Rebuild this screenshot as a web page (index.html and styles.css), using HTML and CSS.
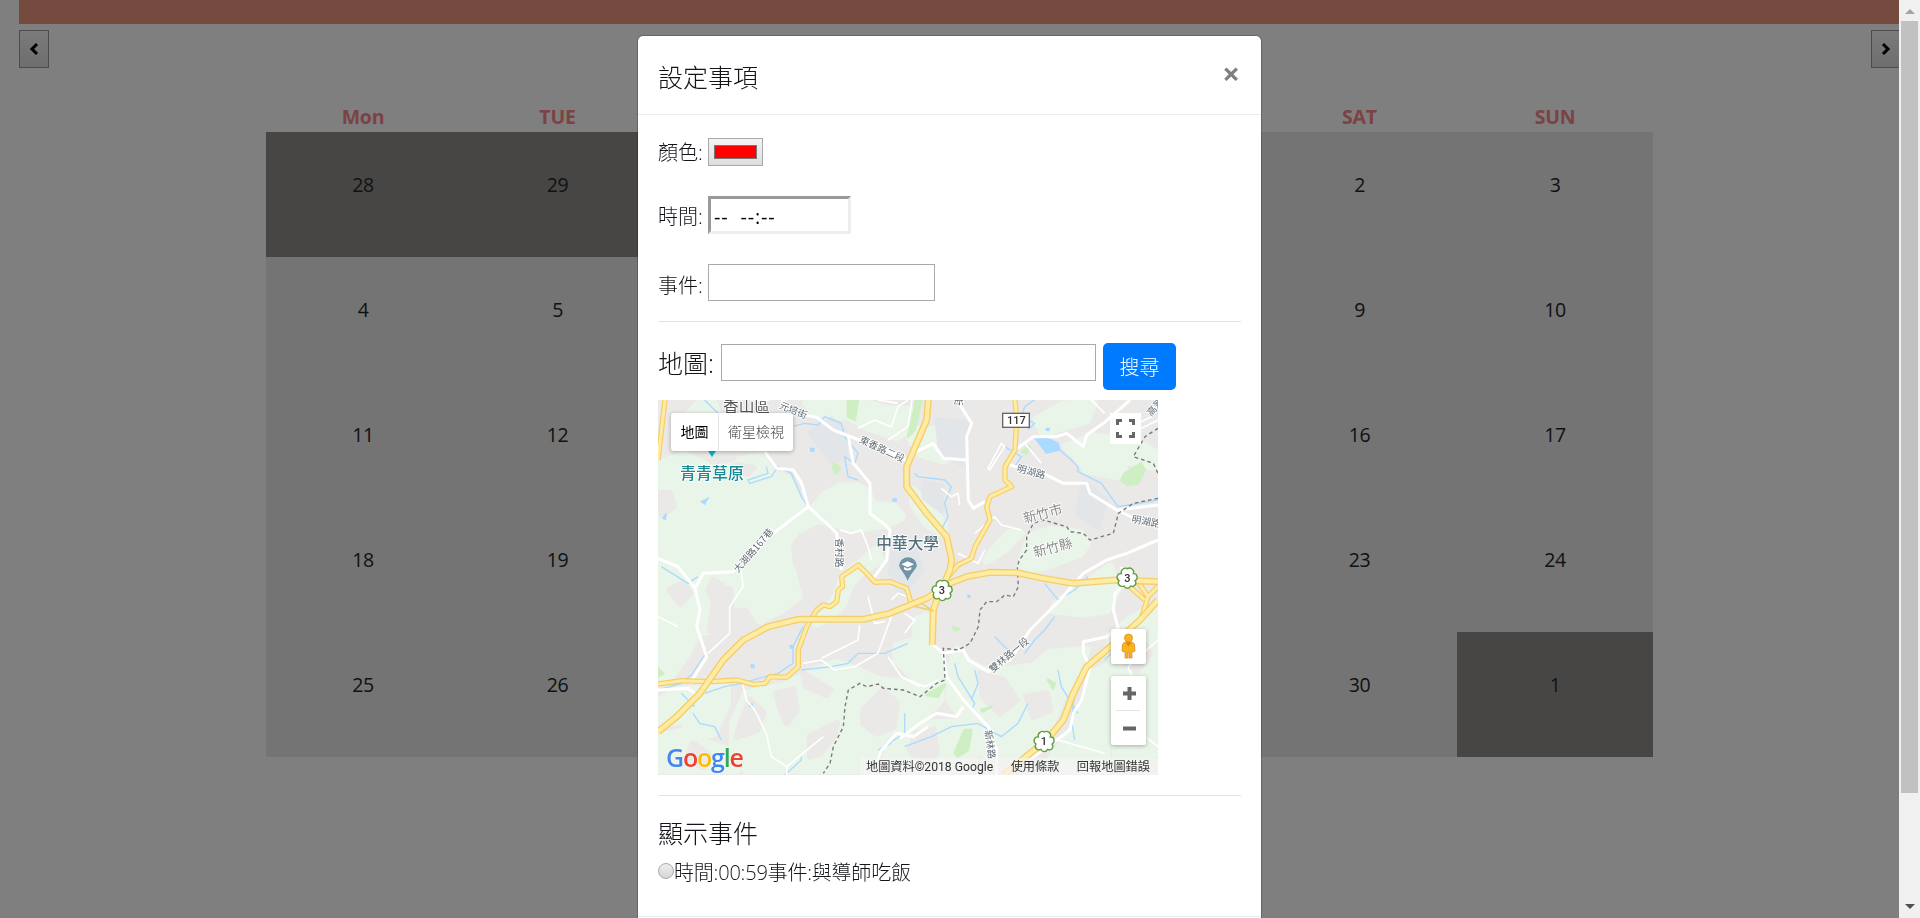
FILE: index.html
```html
<!DOCTYPE html>
<html lang="zh-Hant">
<head>
<meta charset="utf-8">
<title>設定事項</title>
<link rel="stylesheet" href="styles.css">
</head>
<body>
<div class="page">
  <div class="banner"></div>
  <div class="nav">
    <button class="nav-btn"><svg width="10" height="14" viewBox="0 0 10 14"><path d="M8 2 3 7l5 5"/></svg></button>
    <button class="nav-btn"><svg width="10" height="14" viewBox="0 0 10 14"><path d="M2 2l5 5-5 5"/></svg></button>
  </div>
  <div class="calendar">
    <b>Mon</b><b>TUE</b><b>WED</b><b>THU</b><b>FRI</b><b>SAT</b><b>SUN</b>
    <div class="day out">28</div><div class="day out">29</div><div class="day out">30</div><div class="day out">31</div><div class="day">1</div><div class="day">2</div><div class="day">3</div>
    <div class="day">4</div><div class="day">5</div><div class="day">6</div><div class="day">7</div><div class="day">8</div><div class="day">9</div><div class="day">10</div>
    <div class="day">11</div><div class="day">12</div><div class="day">13</div><div class="day">14</div><div class="day">15</div><div class="day">16</div><div class="day">17</div>
    <div class="day">18</div><div class="day">19</div><div class="day">20</div><div class="day">21</div><div class="day">22</div><div class="day">23</div><div class="day">24</div>
    <div class="day">25</div><div class="day">26</div><div class="day">27</div><div class="day">28</div><div class="day">29</div><div class="day">30</div><div class="day out">1</div>
  </div>
</div>

<div class="backdrop">
  <div class="modal">
    <div class="modal-header">
      <h5>設定事項</h5>
      <span class="close">×</span>
    </div>
    <div class="modal-body">
      <div class="row color-row"><label>顏色:</label><span class="color-input"><i></i></span></div>
      <div class="row time-row"><label>時間:</label><span class="time-input">--&nbsp; --:--</span></div>
      <div class="row event-row"><label>事件:</label><span class="text-input"></span></div>
      <hr>
      <div class="search-row"><label>地圖:</label><span class="text-input wide"></span><button class="btn">搜尋</button></div>
      <div class="map">
        <svg class="map-art" viewBox="0 0 1500 1125">
          <rect width="1500" height="1125" fill="#ebe9e7"/>
          <g class="green" transform="translate(-24 -30)">
            <path d="M150 40H190L205 75 240 140 180 150 110 150 100 90Z"/>
            <path d="M35 220 100 195 140 215 180 225 250 215 330 200 365 250 410 265 440 320 480 370 520 320 570 290 620 290 650 305 670 345 730 350 755 380 720 400 600 420 560 400 500 390 440 420 410 460 415 520 440 580 445 620 390 660 330 690 300 640 250 640 235 570 180 540 150 600 180 660 185 720 140 730 110 790 60 860 35 870Z"/>
            <path d="M470 40H640L720 60 780 60 790 110 740 140 650 110 600 80 500 70Z"/>
            <path d="M690 510 640 540 600 580 580 640 540 680 500 700 560 620 580 560 630 520 680 480Z"/>
            <path d="M35 930 80 900 230 895 230 940 190 1030 130 1040 100 990 35 1000Z"/>
            <path d="M35 1040 120 1020 170 1060 230 1080 260 1140 35 1140Z"/>
            <path d="M290 910 400 890 500 840 560 820 640 850 680 870 760 880 870 880 870 930 800 1000 740 1000 700 1040 640 1140 290 1140 250 1080 250 1000Z"/>
            <path d="M780 140 800 120 860 120 900 150 920 190 880 210 810 190Z"/>
            <path d="M1160 90 1240 45 1330 40 1310 90 1240 110 1180 130Z"/>
            <path d="M1250 170 1330 140 1400 150 1440 140 1515 190 1515 230 1420 210 1420 260 1310 240 1280 200Z"/>
            <path d="M1120 500 1140 440 1200 420 1290 430 1310 460 1290 490 1180 530 1110 540Z"/>
            <path d="M1030 480 1080 430 1110 430 1060 480 1010 510Z"/>
            <path d="M790 300 820 330 880 400 880 430 830 400 790 340Z"/>
            <path d="M1380 530 1300 590 1220 640 1210 660 1300 670 1370 660 1400 600Z"/>
            <path d="M800 690 830 680 830 760 880 820 880 870 800 870 740 810 740 770 800 750Z"/>
            <path d="M920 780 960 820 1000 840 1080 840 1150 830 1200 790 1310 780 1290 830 1230 930 1200 1010 1150 1060 1090 1100 1000 1090 950 1000 900 930 900 850Z"/>
            <path d="M1330 850 1370 830 1370 1140 1180 1140 1240 1060 1290 980Z"/>
            <path d="M1440 690 1515 650 1515 1090 1400 1100 1390 860 1380 740Z"/>
            <path d="M760 1010 860 1000 960 1000 990 1080 900 1140 700 1140 720 1060Z"/>
          </g>
          <g class="gray" transform="translate(-24 -30)">
            <path d="M150 190 240 190 250 205 190 215Z"/>
            <path d="M260 225 310 235 290 250 260 245Z"/>
            <path d="M30 310 60 310 70 350 35 375Z"/>
            <path d="M60 600 100 580 120 610 90 640Z"/>
            <path d="M200 590 240 600 245 680 220 740 180 720Z"/>
            <path d="M380 910 430 900 440 960 410 1000 390 950Z"/>
            <path d="M460 850 540 900 530 915 470 890Z"/>
            <path d="M480 1040 560 1000 550 1040 510 1090 480 1100Z"/>
            <path d="M640 960 700 900 740 940 730 1010 680 1030 640 1000Z"/>
            <path d="M300 930 340 970 320 1020 260 1040 280 980Z"/>
            <path d="M990 850 1060 870 1100 930 1050 970 1000 920Z"/>
            <path d="M1130 920 1190 910 1200 960 1150 980Z"/>
            <path d="M1420 740 1460 730 1500 790 1460 840 1400 800Z"/>
            <path d="M800 1030 850 1020 860 1090 820 1120 780 1080Z"/>
            <path d="M130 1060 180 1100 160 1130 110 1110Z"/>
            <path d="M500 430 550 440 540 600 460 590 440 500Z"/>
          </g>
          <g class="park">
            <path d="M570 0H600L590 60 570 50Z"/><path d="M528 190 545 205 535 220 525 205Z"/>
            <path d="M750 110 775 0 790 0 770 90Z"/><path d="M1390 240 1400 220 1450 190 1460 210 1440 250 1410 255Z"/><path d="M1092 155 1115 140 1105 160Z"/>
            <path d="M890 1060 920 990 940 990 930 1050 900 1070Z"/><path d="M1170 840 1190 850 1185 865Z"/><path d="M805 885 860 855 840 890Z"/><path d="M970 930 1000 920 975 935Z"/><path d="M0 805 15 820 0 830Z"/><path d="M885 680 905 688 890 690Z"/>
          </g>
          <g class="town"><path d="M460 100 520 60 560 100 560 170 520 180Z"/><path d="M840 60 930 70 910 190 850 160Z"/><path d="M1280 250 1340 300 1320 380 1260 340Z"/><path d="M710 450 770 450 790 510 730 580 700 520Z"/><path d="M800 250 850 260 850 330 800 290Z"/></g>
          <g class="water">
            <path d="M140 0 200 60M400 80 440 70 480 75 500 50 550 70 560 110 600 160 590 190 560 170 570 230 600 240M325 200 330 220 270 240 275 250 340 230 360 200 400 220 430 290 450 320 500 360 520 390M770 220 780 230 860 240 880 260 860 310 870 350 850 390M1130 0 1100 20 1090 50 1130 70 1110 90M1040 140 1090 170 1070 200M1205 150 1240 180 1260 200 1260 215 1330 250 1380 320 1500 300"/>
            <path d="M140 765 100 825 70 850 0 870M70 880 110 920M105 940 125 970 170 980 190 1020M10 500 90 550 120 530M435 680 405 740 405 790 360 820 320 830 250 850 200 860 140 880M430 810 520 800 570 790 600 760 680 760 750 730M380 1125 430 1080 430 1070M740 940V1000L660 1050 700 1030"/>
            <path d="M890 790 900 830 950 910 940 930M950 810 960 850 940 900M1010 710 1060 760M1160 550 1200 600 1250 570 1290 530M1110 910 1080 970 1030 1010 960 970 880 980 820 1010 740 1040M1190 650 1160 690 1130 720 1100 760M1250 1020 1240 960 1250 880M1200 810 1210 860 1260 940M1340 780 1370 750"/>
            <path class="pond" d="M1131 115 1165 112 1200 130 1206 150 1165 160 1150 140Z"/>
            <path class="pond" d="M130 305 150 295 140 312ZM15 355 25 340 22 358ZM458 145h10v8h-10ZM705 297h10v6h-10ZM1165 85h8v6h-8ZM280 795h8v8h-8ZM397 736h8v8h-8ZM275 912h8v8h-8ZM930 586h6v6h-6Z"/>
          </g>
          <g class="white thin">
            <path d="M600 85 650 60 700 80 720 20 750 0M690 120 750 80 762 0M545 390 580 400 610 390 630 440 640 480M250 510 255 560 215 620 215 700 150 760M630 590 650 670 680 665M700 650 660 760 590 800 530 810 490 780 435 790M605 675 600 720 560 740 490 775M690 770 730 830 786 860M1030 130 1040 140 995 210 990 205Z M951 400 1010 350 1030 375 1090 390M850 265 880 290 900 280 905 315M1100 130 1150 190"/>
            <path d="M255 855 265 900 290 930 325 1000 340 1070 386 1100 496 1010M386 1100V1125M730 830 800 860 840 840M900 460 960 490 980 450M1200 1020 1340 1060M0 650 60 680"/>
            <path d="M660 0 720 10M1380 100 1480 50M1300 0 1340 40M1440 90 1500 60M740 640 770 660 740 700M1430 850 1410 800 1500 720M1400 1000 1450 1000 1500 1040M700 600 720 580 750 590"/>
          </g>
          <g class="white">
            <path d="M370 0 440 45 476 52 526 90 596 117 656 135 760 190M320 155 356 205 406 210 431 250 451 320 346 400 276 450 226 515 136 520 111 565 60 500 0 475M111 565 126 630 116 680 146 770 96 850M451 320 506 370 536 400 546 480 551 510M571 110 586 190 636 250 636 340 676 370 696 390 686 480 646 535"/>
            <path d="M896 0 941 70 926 110 931 300 946 325 981 305M776 155 826 130 856 175 926 180M1071 150 1126 110 1196 110 1226 100 1276 140 1286 105 1336 70 1416 0M1056 195 1166 225 1216 250 1286 250 1296 280 1376 330 1500 315M1376 330 1440 360"/>
            <path d="M826 735 856 760 866 830 916 900 991 980 1016 1050 1016 1125M856 760 916 750 931 780 991 815 1056 780 1116 690 1206 600 1276 520 1346 480 1406 460 1500 420M1391 500 1391 560 1371 580 1366 630 1381 685 1346 710 1276 725 1276 760 1296 800 1271 900 1246 940 1236 990 1196 1020 1100 1090M726 1015 786 970 836 940 896 950 916 920M640 1125 671 1050 716 1000 766 1010 810 980M0 870 90 865 110 880"/>
          </g>
          <g class="dash"><path d="M1500 85 1461 110 1426 170 1486 190 1500 220M1500 295 1426 310 1381 340 1366 400 1296 420 1276 400 1236 395 1226 380 1156 360 1126 370 1106 410 1106 450 1084 480 1078 500 1081 560 1066 590 1041 585 1016 605 986 605 966 630 961 680 936 730 901 750 856 745 861 840 836 850 786 890 736 870 676 865 661 852 626 860 606 850 571 870 561 920 556 980 526 1040 516 1090 496 1120"/></g>
          <g class="yellow-edge"><path d="M21 0 0 180M0 852 71 842 156 845 236 840 286 853 321 850 336 830 386 832 421 800 421 750 446 680 476 630 496 615 516 620 536 605 541 570 554 560 551 530 601 495 626 520 651 547 696 545 746 565 761 615M1071 0 1076 60 1071 150 1041 200 1041 240 1061 260 996 290 986 320 996 360 951 440 940 475 900 495 870 530M1440 545 1470 590 1450 655M1500 560 1470 590M1410 555 1460 600"/></g>
          <g class="yellow"><path d="M21 0 0 180M0 852 71 842 156 845 236 840 286 853 321 850 336 830 386 832 421 800 421 750 446 680 476 630 496 615 516 620 536 605 541 570 554 560 551 530 601 495 626 520 651 547 696 545 746 565 761 615M1071 0 1076 60 1071 150 1041 200 1041 240 1061 260 996 290 986 320 996 360 951 440 940 475 900 495 870 530M1440 545 1470 590 1450 655M1500 560 1470 590M1410 555 1460 600"/></g>
          <g class="yellow-edge major"><path d="M811 0 806 60 746 200 746 260 806 340 866 410 881 480 876 510 836 600 826 630 823 735M0 995 56 950 126 880 196 780 256 720 331 680 421 658 616 658 696 640 806 595 876 550 926 530 996 517 1076 518 1156 535 1246 550 1376 540 1500 545M1500 600 1446 660 1346 750 1286 800 1246 880 1216 960 1166 1020 1036 1125"/></g>
          <g class="yellow major"><path d="M811 0 806 60 746 200 746 260 806 340 866 410 881 480 876 510 836 600 826 630 823 735M0 995 56 950 126 880 196 780 256 720 331 680 421 658 616 658 696 640 806 595 876 550 926 530 996 517 1076 518 1156 535 1246 550 1376 540 1500 545M1500 600 1446 660 1346 750 1286 800 1246 880 1216 960 1166 1020 1036 1125"/></g>
          <g class="yellow-edge ramp"><path d="M765 618 825 632 790 610M860 595 885 570"/></g>
          <g class="shield">
            <path id="flower" d="M853 543C862 537 876 547 871 558 884 557 886 575 876 579 884 590 871 600 863 595 858 604 847 604 843 595 832 600 821 590 828 579 818 573 822 556 835 558 831 546 846 538 853 543Z"/>
            <use href="#flower" x="555" y="-37"/><use href="#flower" x="306" y="453"/>
            <rect x="1034" y="40" width="80" height="42"/>
          </g>
          <g class="num" text-anchor="middle"><text x="852" y="583">3</text><text x="1408" y="546">3</text><text x="1158" y="1036">1</text><text x="1075" y="72">117</text></g>
          <g transform="translate(0 -68)"><path d="M749 614C740 590 722 572 722 566a28 28 0 1 1 56 0c0 6-20 24-29 48Z" fill="#7295a6" stroke="#e5eef4" stroke-width="3"/><path d="M749 552 768 561 749 570 730 561ZM738 569 749 574 760 569V576Q749 583 738 576Z" fill="#fff"/></g>
          <path d="M150 152h24l-12 20Z" fill="#12b5c4"/>
          <g class="label">
            <text x="195" y="36" class="big">香山區</text>
            <text x="66" y="237" class="poi">青青草原</text>
            <text x="655" y="448" class="uni">中華大學</text>
            <text transform="translate(362 24) rotate(22)">元培街</text>
            <text transform="translate(602 126) rotate(25)">東香路二段</text>
            <text transform="translate(240 520) rotate(-49)">大湖路167巷</text>
            <text transform="translate(533 415) rotate(90)">香村路</text>
            <text transform="translate(1075 214) rotate(15)">明湖路</text>
            <text transform="translate(1420 367) rotate(10)">明湖路</text>
            <text transform="translate(1480 50) rotate(-48)">高翠路</text>
            <text transform="translate(1100 370) rotate(-15)" class="area">新竹市</text>
            <text transform="translate(1130 472) rotate(-15)" class="area">新竹縣</text>
            <text transform="translate(1004 819) rotate(-40)">雙林路一段</text>
            <text transform="translate(980 992) rotate(82)">新林路</text>
            <text transform="translate(892 -12) rotate(90)">街</text>
          </g>
        </svg>
        <div class="map-type"><span>地圖</span><span>衛星檢視</span></div>
        <div class="fullscreen"><svg width="19" height="19" viewBox="0 0 19 19"><path d="M1.5 6V1.5H6M13 1.5h4.500V6M17.500 13v4.500H13M6 17.500H1.500V13"/></svg></div>
        <div class="pegman"><svg width="17" height="27" viewBox="0 0 17 27"><path d="M5 9 2.500 11 2 18l2 1 1-1v7h3v-6h1v6h3v-7l1 1 2-1-.5-7L12 9Z" fill="#fbb31b" stroke="#c98a2d" stroke-width=".7"/><circle cx="8.500" cy="5" r="4" fill="#fbb31b" stroke="#cc8a22" stroke-width=".7"/><path d="M5.500 9.500h6l-3 4Z" fill="#ee7b22"/></svg></div>
        <div class="zoom"><svg width="35" height="69" viewBox="0 0 35 69"><path d="M12 17.500h13M18.500 11v13M12 52.500h13" stroke="#666" stroke-width="4"/><path d="M5 34.500h24" stroke="#e3e3e3"/></svg></div>
        <div class="google"><span class="b">G</span><span class="r">o</span><span class="y">o</span><span class="b">g</span><span class="g">l</span><span class="r">e</span></div>
        <div class="credits"><span>地圖資料©2018 Google</span><span>使用條款</span><span>回報地圖錯誤</span></div>
      </div>
      <hr class="second">
      <h5 class="events-title">顯示事件</h5>
      <div class="event-item"><i class="radio"></i><span>時間:00:59事件:與導師吃飯</span></div>
    </div>
    <div class="modal-footer"></div>
  </div>
</div>
<div class="scrollbar"><i class="up"></i><i class="thumb"></i><i class="down"></i></div>
</body>
</html>
```

FILE: styles.css
```css
* { box-sizing: border-box; }
html, body { margin: 0; height: 100%; overflow: hidden; }
body { background: #fff; color: #111418; font: 300 20px/30px "Open Sans", "Noto Sans CJK TC", sans-serif; }
h5 { margin: 0; font-size: 25px; font-weight: 300; line-height: 30px; }
i { display: block; }
.page { width: 1899px; height: 918px; padding-left: 19px; overflow: hidden; }
.banner { height: 24px; background: #ec967e; }
.nav { display: flex; justify-content: space-between; width: 1882px; padding-top: 6px; }
.nav-btn { width: 30px; height: 38px; padding: 0; border: 1px solid #999; background: linear-gradient(#f6f6f6, #dcdcdc); display: flex; align-items: center; justify-content: center; }
.nav-btn svg { fill: none; stroke: #000; stroke-width: 3; }
.calendar { display: grid; grid-template-columns: 194px 195px 202px 202px 203px 195px 196px; grid-template-rows: 30px repeat(5, 125px); margin: 34px 0 0 247px; width: 1387px; text-align: center; }
.calendar b { color: #f88488; font-weight: 700; font-size: 19.5px; letter-spacing: -.2px; }
.day { background: #e8e8e8; padding-top: 38px; font-size: 19.5px; letter-spacing: -.4px; font-weight: 400; color: #212529; }
.day.out { background: #908d89; }
.backdrop { position: fixed; inset: 0 21px 0 0; background: rgba(0,0,0,.5); overflow: hidden; }
.modal { width: 625px; margin: 35px 0 0 637px; background: #fff; background-clip: padding-box; border: 1px solid rgba(0,0,0,.2); border-radius: 6px; }
.modal-header { height: 79px; display: flex; justify-content: space-between; padding: 26px 21px 0 20px; border-bottom: 1px solid #e9ecef; }
.close { font-size: 31px; line-height: 22px; font-weight: 700; color: #7f7f7f; }
.modal-body { padding: 23px 20px 0; height: 801px; }
.row, .search-row { display: flex; }
.row label { width: 50px; white-space: nowrap; }
.color-row { height: 58px; }
.color-row label { line-height: 30px; }
.color-input { width: 55px; height: 28px; padding: 6px 5px; border: 1px solid #a9a9a9; background: linear-gradient(#f4f4f4, #ddd); }
.color-input i { height: 14px; background: red; border: 1px solid #777; }
.time-row { height: 68px; }
.time-row label { padding-top: 6px; }
.time-input { width: 143px; height: 38px; border: 3px solid; border-color: #999 #eee #eee #999; padding-left: 3px; line-height: 35px; font-size: 20px; letter-spacing: .8px; font-weight: 400; color: #000; }
.event-row { height: 57px; }
.event-row label { padding-top: 7px; }
.text-input { width: 227px; height: 37px; border: 1px solid #a9a9a9; background: #fff; }
hr { margin: 0; border: 0; border-top: 1px solid #e3e3e3; }
.search-row { height: 78px; padding-top: 21px; }
.search-row label { width: 63px; font-size: 25px; line-height: 40px; white-space: nowrap; }
.text-input.wide { width: 375px; margin-top: 1px; }
.btn { margin-left: 7px; width: 73px; height: 47px; padding: 3px 0 0; border: 0; border-radius: 5px; background: #007bff; color: #fff; font: inherit; }
.map { position: relative; width: 500px; height: 375px; overflow: hidden; }
.map-art { display: block; width: 500px; height: 375px; }
.green path { fill: #eaf5e9; stroke: #eaf5e9; stroke-width: 26; stroke-linejoin: round; }
.gray path { fill: #ebe9e7; stroke: #ebe9e7; stroke-width: 20; stroke-linejoin: round; }
.park path { fill: #ceeec3; stroke: #ceeec3; stroke-width: 8; stroke-linejoin: round; }
.town path { fill: #e3e6e9; stroke: #e3e6e9; stroke-width: 20; stroke-linejoin: round; }
.water path { fill: none; stroke: #aadaff; stroke-width: 4; }
.water .pond { fill: #aadaff; }
.white path { fill: none; stroke: #fff; stroke-width: 9; stroke-linejoin: round; }
.white.thin path { stroke-width: 5; }
.dash path { fill: none; stroke: #777; stroke-width: 4; stroke-dasharray: 11 9; }
.yellow-edge path { fill: none; stroke: #f3ce69; stroke-width: 16; stroke-linejoin: round; }
.yellow path { fill: none; stroke: #ffeba1; stroke-width: 9; stroke-linejoin: round; }
.yellow-edge.major path { stroke-width: 21; }
.yellow.major path { stroke-width: 13; }
.yellow-edge.ramp path { stroke-width: 5; }
.shield path, .shield use { fill: #fff; stroke: #5f9d43; stroke-width: 4; }
.shield rect { fill: #fff; stroke: #666; stroke-width: 4; }
.num text { font: 500 33px Roboto, sans-serif; fill: #333; }
.label text { font: 400 29px "Noto Sans CJK TC", sans-serif; fill: #5f6c75; stroke: #fff; stroke-width: 5; paint-order: stroke; }
.label .big { font-size: 47px; fill: #555; }
.label .poi { font-size: 48px; font-weight: 500; fill: #168a96; }
.label .uni { font-size: 47px; font-weight: 500; fill: #54707e; }
.label .area { font-size: 40px; fill: #8a8a8a; }
.map-type { position: absolute; left: 13px; top: 13px; width: 122px; height: 38px; display: flex; background: #fff; border-radius: 3px; box-shadow: 0 1px 4px rgba(0,0,0,.3); font-size: 14px; line-height: 38px; color: #000; white-space: nowrap; }
.map-type span { width: 47px; text-align: center; font-weight: 400; }
.map-type span + span { width: 75px; color: #444; border-left: 1px solid #e6e6e6; font-weight: 300; }
.fullscreen { position: absolute; left: 452px; top: 13px; width: 31px; height: 31px; padding: 6px; background: #fff; }
.fullscreen svg { display: block; fill: none; stroke: #666; stroke-width: 3; }
.pegman, .zoom { position: absolute; left: 453px; width: 35px; background: #fff; border-radius: 2px; box-shadow: 0 1px 4px rgba(0,0,0,.3); }
.pegman { top: 229px; height: 35px; padding: 4px 9px; }
.zoom { top: 276px; height: 69px; }
.pegman svg, .zoom svg { display: block; }
.google { position: absolute; left: 8px; top: 341px; font: 600 25px/32px "Open Sans", sans-serif; letter-spacing: -1.2px; text-shadow: 0 0 2px #fff; }
.b { color: #4285f4; } .r { color: #ea4335; } .y { color: #fbbc05; } .g { color: #34a853; }
.credits { position: absolute; right: 0; bottom: 0; height: 17px; width: 298px; padding: 0 8px 0 6px; display: flex; justify-content: space-between; background: rgba(245,245,245,.7); font: 400 12.2px/19px Roboto, "Noto Sans CJK TC", sans-serif; color: #333; white-space: nowrap; }
.second { margin-top: 20px; }
.events-title { padding-top: 22px; height: 57px; }
.event-item { display: flex; align-items: center; height: 40px; }
.radio { width: 16px; height: 16px; border: 1px solid #aaa; border-radius: 50%; background: linear-gradient(#eee, #d5d5d5); margin-top: -4px; }
.event-item span { white-space: nowrap; letter-spacing: -.2px; }
.modal-footer { height: 60px; border-top: 1px solid #e9ecef; }
.scrollbar { position: fixed; right: 0; top: 0; width: 21px; height: 918px; padding: 9px 2px 9px; background: #f0f0f0; display: flex; flex-direction: column; align-items: center; }
.up { border: 5px solid transparent; border-top: 0; border-bottom: 5px solid #a3a3a3; }
.thumb { margin-top: 7px; width: 17px; height: 772px; background: #c1c1c1; }
.down { margin-top: auto; border: 5px solid transparent; border-bottom: 0; border-top: 5px solid #505050; }
```
